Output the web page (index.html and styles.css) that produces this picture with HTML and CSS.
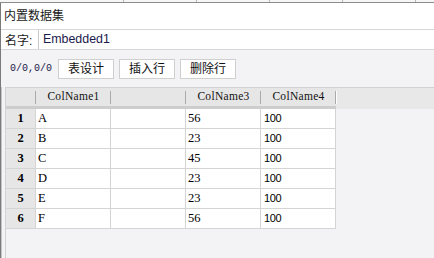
FILE: index.html
```html
<!DOCTYPE html>
<html>
<head>
<meta charset="utf-8">
<link rel="stylesheet" href="styles.css">
</head>
<body>
<div class="topstrip">
  <span class="seg s1"></span><span class="seg"></span><span class="seg"></span><span class="seg"></span><span class="seg"></span>
</div>
<div class="window">
  <div class="title">内置数据集</div>
  <div class="namerow">
    <span class="label">名字:</span>
    <div class="input">Embedded1</div>
  </div>
  <div class="toolbar">
    <span class="pos">0/0,0/0</span>
    <button class="btn">表设计</button>
    <button class="btn">插入行</button>
    <button class="btn">删除行</button>
  </div>
  <div class="panel">
    <div class="hband">
      <div class="hc c0"></div>
      <div class="hc">ColName1</div>
      <div class="hc"></div>
      <div class="hc">ColName3</div>
      <div class="hc">ColName4</div>
    </div>
    <div class="row"><div class="rc">1</div><div class="dc">A</div><div class="dc"></div><div class="dc">56</div><div class="dc sans">100</div></div>
    <div class="row"><div class="rc">2</div><div class="dc">B</div><div class="dc"></div><div class="dc">23</div><div class="dc sans">100</div></div>
    <div class="row"><div class="rc">3</div><div class="dc">C</div><div class="dc"></div><div class="dc">45</div><div class="dc sans">100</div></div>
    <div class="row"><div class="rc">4</div><div class="dc">D</div><div class="dc"></div><div class="dc">23</div><div class="dc sans">100</div></div>
    <div class="row"><div class="rc">5</div><div class="dc">E</div><div class="dc"></div><div class="dc">23</div><div class="dc sans">100</div></div>
    <div class="row"><div class="rc">6</div><div class="dc">F</div><div class="dc"></div><div class="dc">56</div><div class="dc sans">100</div></div>
  </div>
</div>
</body>
</html>
```

FILE: styles.css
```css
html, body {
  margin: 0;
  padding: 0;
}
* { box-sizing: border-box; }
body {
  width: 434px;
  height: 258px;
  overflow: hidden;
  background: #f3f3f5;
  font-family: "Liberation Sans", "Noto Sans CJK SC", sans-serif;
  display: flex;
  flex-direction: column;
}
.topstrip {
  height: 3px;
  flex: none;
  display: flex;
  background: #f6f6f6;
  border-bottom: 1px solid #8c8c8c;
}
.seg {
  width: 73px;
  border-right: 1px solid #b8b8b8;
  flex: none;
}
.s1 { width: 124px; }
.window {
  flex: 1;
  display: flex;
  flex-direction: column;
  border-left: 1px solid #7a7a7a;
  box-shadow: inset 1px 0 0 #c4c4c4;
  min-height: 0;
}
.title {
  height: 27px;
  line-height: 26px;
  background: #fff;
  padding-left: 3px;
  font-size: 12px;
  color: #1a1a1a;
  border-bottom: 1px solid #d8d8d8;
  flex: none;
}
.namerow {
  height: 20px;
  background: #fff;
  display: flex;
  align-items: center;
  border-bottom: 1px solid #d8d8d8;
  flex: none;
}
.label {
  width: 37px;
  padding-left: 4px;
  font-size: 12px;
  color: #1a1a1a;
  flex: none;
}
.input {
  flex: 1;
  height: 19px;
  line-height: 19px;
  border-left: 1px solid #c8c8c8;
  padding-left: 4px;
  font-size: 12.4px;
  color: #1c1a4c;
}
.toolbar {
  height: 37px;
  display: flex;
  align-items: center;
  padding-left: 9px;
  flex: none;
  background: #f3f3f5;
}
.pos {
  font-family: "Liberation Mono", monospace;
  font-size: 10px;
  color: #1c1a4c;
  margin-right: 6px;
}
.btn {
  width: 56px;
  height: 20px;
  margin: 0 5px 0 0;
  padding: 0;
  background: #fff;
  border: 1px solid #cfcfcf;
  border-radius: 0;
  font-family: "Liberation Sans", "Noto Sans CJK SC", sans-serif;
  font-size: 12px;
  color: #111;
  line-height: 18px;
}
.panel {
  flex: 1;
  margin-left: 4px;
  border-top: 1px solid #d2d2d2;
  border-left: 1px solid #d2d2d2;
  background: #f3f3f5;
}
.hband {
  display: flex;
  height: 21px;
  background: #e8e8e8;
}
.hc {
  position: relative;
  width: 75px;
  height: 21px;
  border-bottom: 3px solid #cdcdcd;
  background: #e6e6e6;
  font-family: "Liberation Serif", serif;
  font-size: 11.5px;
  letter-spacing: 0.3px;
  line-height: 17px;
  text-align: center;
  color: #111;
  flex: none;
}
.hc::after {
  content: "";
  position: absolute;
  right: 0;
  top: 3px;
  width: 1px;
  height: 13px;
  background: #aaaaaa;
  box-shadow: 1px 0 0 #ffffff;
}
.hc.c0 { width: 30px; }
.row {
  display: flex;
  height: 20px;
}
.rc, .dc {
  width: 75px;
  height: 20px;
  border-right: 1px solid #d4d4d4;
  border-bottom: 1px solid #d4d4d4;
  font-family: "Liberation Serif", serif;
  font-size: 12.5px;
  line-height: 19px;
  color: #000;
  flex: none;
}
.dc {
  background: #fff;
  padding-left: 2px;
}
.rc {
  width: 30px;
  background: #e6e6e6;
  text-align: center;
  font-weight: bold;
}
.dc.sans {
  font-family: "Liberation Sans", sans-serif;
  font-size: 11px;
  letter-spacing: -0.4px;
  padding-left: 3px;
}
```
